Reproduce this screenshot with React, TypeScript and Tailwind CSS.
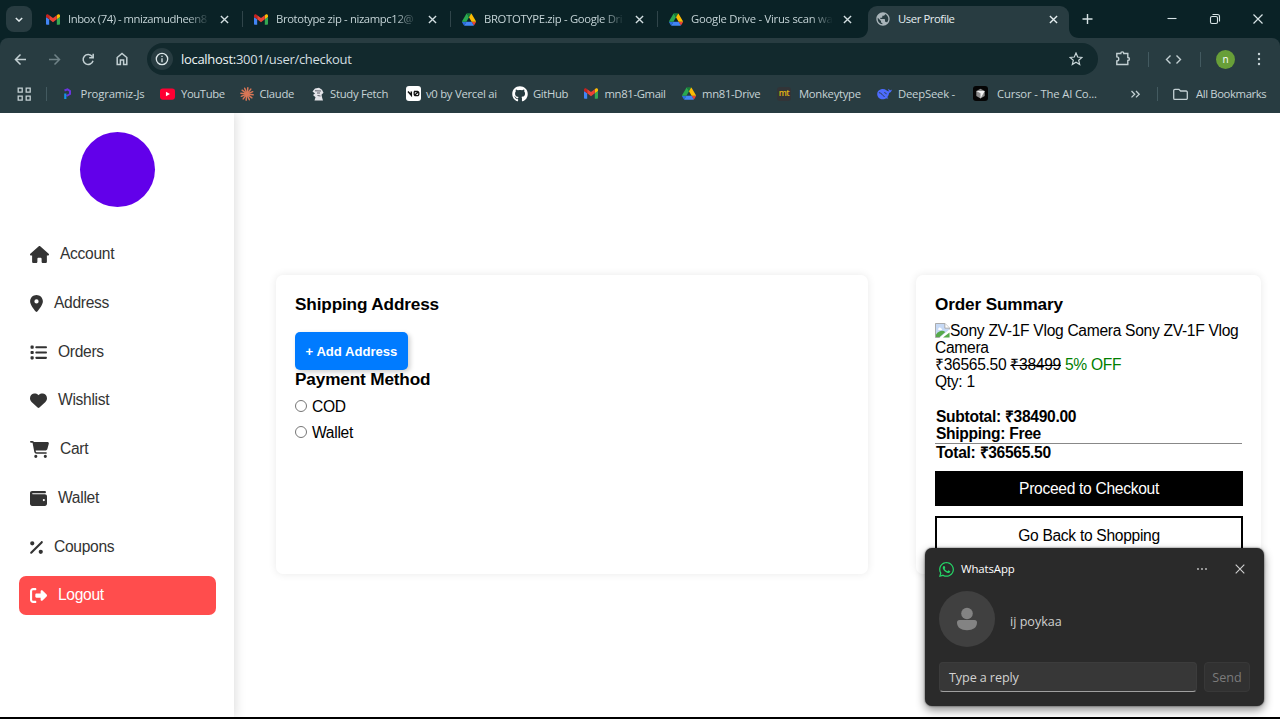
import React from "react";
import {
  FaCartShopping,
  FaGithub,
  FaHeart,
  FaHouse,
  FaList,
  FaLocationDot,
  FaPercent,
  FaRightFromBracket,
  FaWallet,
  FaWhatsapp,
} from "react-icons/fa6";
import { MdPublic } from "react-icons/md";

const ui = "font-['Open_Sans','Noto_Sans',sans-serif]";
const page = "font-['Liberation_Sans',Arial,sans-serif]";

function Gmail({ className }: { className: string }) {
  return (
    <svg viewBox="52 42 88 66" className={className}>
      <path fill="#4285f4" d="M58 108h14V74L52 59v43c0 3.32 2.69 6 6 6" />
      <path fill="#34a853" d="M120 108h14c3.32 0 6-2.69 6-6V59l-20 15" />
      <path fill="#fbbc04" d="M120 48v26l20-15v-8c0-7.42-8.47-11.65-14.4-7.2" />
      <path fill="#ea4335" d="M72 74V48l24 18 24-18v26L96 92" />
      <path fill="#c5221f" d="M52 51v8l20 15V48l-5.6-4.2c-5.94-4.45-14.4-.22-14.4 7.2" />
    </svg>
  );
}

function Drive({ className }: { className: string }) {
  return (
    <svg viewBox="0 0 87.3 78" className={className}>
      <path fill="#2b6fe0" d="m6.6 66.85 3.85 6.65c.8 1.4 1.95 2.5 3.3 3.3l13.75-23.8h-27.5c0 1.55.4 3.1 1.2 4.5z" />
      <path fill="#2aa950" d="m43.65 25-13.75-23.8c-1.35.8-2.5 1.9-3.3 3.3l-25.4 44a9.06 9.06 0 0 0 -1.2 4.5h27.5z" />
      <path fill="#ea4335" d="m73.55 76.8c1.35-.8 2.5-1.9 3.3-3.3l1.6-2.75 7.65-13.25c.8-1.4 1.2-2.95 1.2-4.5h-27.502l5.852 11.5z" />
      <path fill="#188038" d="m43.65 25 13.75-23.8c-1.35-.8-2.9-1.2-4.5-1.2h-18.5c-1.6 0-3.15.45-4.5 1.2z" />
      <path fill="#4285f4" d="m59.8 53h-32.3l-13.75 23.8c1.35.8 2.9 1.2 4.5 1.2h50.8c1.6 0 3.15-.45 4.5-1.2z" />
      <path fill="#fbbc04" d="m73.4 26.5-12.7-22c-.8-1.4-1.95-2.5-3.3-3.3l-13.75 23.8 16.15 28h27.45c0-1.55-.4-3.1-1.2-4.5z" />
    </svg>
  );
}

function Cross({ className }: { className: string }) {
  return (
    <svg viewBox="0 0 10 10" className={className} stroke="currentColor" strokeWidth="1.5" fill="none">
      <path d="M1 1l8 8M9 1l-8 8" />
    </svg>
  );
}

function Tab({ icon, title, width, textWidth, tracking, divider = true }: { icon: React.ReactNode; title: string; width: string; textWidth: string; tracking: string; divider?: boolean }) {
  return (
    <div className={`flex h-[38px] shrink-0 items-center ${width}`}>
      <span className="flex w-[22px] shrink-0 items-center">{icon}</span>
      <span
        className={`shrink-0 whitespace-nowrap text-[11.3px] leading-4 text-[#c4d3d6] [mask-image:linear-gradient(to_right,black_84%,transparent)] ${textWidth} ${tracking}`}
      >
        {title}
      </span>
      <Cross className="ml-[10px] h-[9px] w-[9px] shrink-0 text-[#d3dfe1]" />
      {divider && <span className="ml-auto h-4 w-px bg-[#30454a]" />}
    </div>
  );
}

function TabStrip() {
  return (
    <div className="flex h-[38px] w-full bg-[#0a2226]">
      <div className="flex w-[46px] shrink-0 items-center pl-[6px]">
        <div className="flex h-[26px] w-[26px] items-center justify-center rounded-[8px] bg-[#283c41]">
          <svg viewBox="0 0 10 6" className="h-[5px] w-[8px]" fill="none" stroke="#e0eaec" strokeWidth="1.8">
            <path d="M1 1l4 4 4-4" />
          </svg>
        </div>
      </div>
      <Tab icon={<Gmail className="h-[11px] w-[14px]" />} title="Inbox (74) - mnizamudheen8" width="w-[197px]" textWidth="w-[142px]" tracking="tracking-[-0.47px]" />
      <div className="w-[11px] shrink-0" />
      <Tab icon={<Gmail className="h-[11px] w-[14px]" />} title="Brototype zip - nizampc12@" width="w-[197px]" textWidth="w-[142px]" tracking="tracking-[-0.38px]" />
      <div className="w-[11px] shrink-0" />
      <Tab icon={<Drive className="h-[13px] w-[14px]" />} title="BROTOTYPE.zip - Google Dri" width="w-[196px]" textWidth="w-[141px]" tracking="tracking-[-0.33px]" />
      <div className="w-[11px] shrink-0" />
      <Tab icon={<Drive className="h-[13px] w-[14px]" />} title="Google Drive - Virus scan wa" width="w-[189px]" textWidth="w-[142px]" tracking="tracking-[-0.25px]" divider={false} />
      <div className="flex h-[38px] w-[223px] shrink-0 items-end">
        <svg viewBox="0 0 10 10" className="h-[10px] w-[10px]">
          <path d="M10 0v10H0C6 10 10 6 10 0Z" fill="#283c41" />
        </svg>
        <div className="flex h-[32px] w-[201px] items-center rounded-t-[9px] bg-[#283c41] pb-[6px] pl-[7px]">
          <MdPublic className="h-[16px] w-[16px] text-[#a9b4b9]" />
          <span className="ml-[7px] w-[146px] text-[11.3px] leading-4 tracking-[-0.42px] text-[#e5eef0]">User Profile</span>
          <Cross className="ml-[5px] h-[9px] w-[9px] text-[#e5eef0]" />
        </div>
        <svg viewBox="0 0 10 10" className="h-[10px] w-[10px]">
          <path d="M0 0v10h10C4 10 0 6 0 0Z" fill="#283c41" />
        </svg>
      </div>
      <svg viewBox="1.5 0 199 38" className="h-[38px] w-[199px] shrink-0" fill="none" stroke="#d7e3e5">
        <path d="M3 19h10M8 14v10" strokeWidth="1.4" />
        <path d="M88 18.500h9" strokeWidth="1.1" />
        <rect x="131" y="16.500" width="7" height="7" rx="1.500" strokeWidth="1.1" />
        <path d="M133 14.500h5a2 2 0 0 1 2 2v5" strokeWidth="1.1" />
        <path d="M174 14.500l9 9M183 14.500l-9 9" strokeWidth="1.2" />
      </svg>
    </div>
  );
}

function Toolbar() {
  return (
    <div className="flex h-[42px] w-full items-center rounded-t-[8px] bg-[#283c41]">
      <svg viewBox="0 0 147 42" className="h-[42px] w-[147px] shrink-0" fill="none" strokeWidth="1.5">
        <path d="M26 21.500H16M20.500 16.500l-5 5 5 5" stroke="#c3d0d3" />
        <path d="M49 21.500h10M54.500 16.500l5 5-5 5" stroke="#6f8287" />
        <path d="M92.200 18.500a5 5 0 1 0 .8 4.200M93.200 15.700v4h-4" stroke="#c3d0d3" />
        <path d="M117.200 26.500v-7l4.800-4 4.800 4v7h-3.200v-4.500h-3.200v4.500Z" stroke="#c3d0d3" />
      </svg>
      <div className="flex h-[32px] w-[951px] shrink-0 items-center rounded-full bg-[#12292d] pl-[4px] pr-[15px]">
        <span className="flex h-[22px] w-[22px] items-center justify-center rounded-full bg-[#283c41]">
          <svg viewBox="0 0 14 14" className="h-[14px] w-[14px]" fill="none" stroke="#dce7e9" strokeWidth="1.3">
            <circle cx="7" cy="7" r="5.700" />
            <path d="M7 6.200v4M7 3.800v1.300" />
          </svg>
        </span>
        <span className="ml-[8px] text-[13px] leading-5 tracking-[-0.3px] text-[#d3dee0]">
          <span className="text-[#eef5f6]">localhost:</span>3001/user/checkout
        </span>
        <svg viewBox="0 0 14 14" className="ml-auto h-[14px] w-[14px]" fill="none" stroke="#c9d6d9" strokeWidth="1.2">
          <path d="M7 1l1.700 4 4.300.4-3.300 2.900 1 4.300L7 10.300l-3.700 2.300 1-4.300L1 5.400 5.300 5Z" />
        </svg>
      </div>
      <svg viewBox="0 0 115 42" className="h-[42px] w-[115px] shrink-0" fill="none" stroke="#c3d0d3" strokeWidth="1.4">
        <path d="M18.500 16.500h4c0-2.200 3-2.200 3 0h4v4c2.200 0 2.200 3 0 3v4H18.500v-3.600c2.600 0 2.600-4 0-4Z" transform="translate(.3 -1)" />
        <path d="M50.500 14v15M102.500 14v15" stroke="#435a60" strokeWidth="1" />
        <path d="M72.500 17.500l-4 4 4 4M78.500 17.500l4 4-4 4" />
      </svg>
      <div className="ml-[3px] flex h-[19px] w-[19px] items-center justify-center rounded-full bg-[#689f38] pb-px text-[10px] leading-none text-white">n</div>
      <svg viewBox="0 0 4 16" className="ml-[22px] h-[16px] w-[4px]" fill="#c9d6d9">
        <circle cx="2" cy="3" r="1.200" />
        <circle cx="2" cy="8" r="1.200" />
        <circle cx="2" cy="13" r="1.200" />
      </svg>
    </div>
  );
}

const rays = [0, 30, 60, 90, 120, 150, 180, 210, 240, 270, 300, 330];

const bookmarks: { label: string; width: string; icon: React.ReactNode; gap: string; tracking: string }[] = [
  {
    label: "Programiz-Js", width: "w-[98px]", gap: "w-[18.5px]", tracking: "tracking-[-0.15px]",
    icon: (
      <svg viewBox="0 0 12 14" className="h-[14px] w-[12px]" fill="none">
        <path d="M2.500 3.500 5.500 2.300 8 4v3L4.500 9" stroke="#6a35e0" strokeWidth="2" />
        <path d="M3.300 6.500V12" stroke="#1693e8" strokeWidth="2.200" />
      </svg>
    ),
  },
  {
    label: "YouTube", width: "w-[80px]", gap: "w-[21px]", tracking: "tracking-[-0.4px]",
    icon: (
      <svg viewBox="0 0 16 12" className="h-[12px] w-[15px]">
        <rect width="16" height="12" rx="3" fill="#ff0033" />
        <path d="M6.300 3.500v5l4.300-2.500Z" fill="#fff" />
      </svg>
    ),
  },
  {
    label: "Claude", width: "w-[71px]", gap: "w-[19.5px]", tracking: "tracking-[-0.3px]",
    icon: (
      <svg viewBox="0 0 14 14" className="h-[14px] w-[14px]" stroke="#d97757" strokeWidth="1.500" strokeLinecap="round">
        {rays.map((a) => (
          <path key={a} d="M7 7V.8" transform={`rotate(${a + 8} 7 7)`} />
        ))}
      </svg>
    ),
  },
  {
    label: "Study Fetch", width: "w-[95px]", gap: "w-[19px]", tracking: "tracking-[-0.28px]",
    icon: (
      <svg viewBox="0 0 14 14" className="h-[14px] w-[14px]">
        <path d="M1.500 4.500 4 1.500l4-.8 3 2 1.500 3-2 2 .5 2.500 1 3.300H3.500l1-3.200L2 8l2-1.500Z" fill="#e3e3e8" />
        <path d="m4 3.800 6 .2M6 6h3M6.500 8.500l3 .5" stroke="#4c4c57" strokeWidth=".9" />
      </svg>
    ),
  },
  {
    label: "v0 by Vercel ai", width: "w-[106px]", gap: "w-[20px]", tracking: "tracking-[-0.27px]",
    icon: (
      <svg viewBox="0 0 15 15" className="h-[15px] w-[15px]" fill="none" stroke="#111" strokeWidth="1.500">
        <rect width="15" height="15" rx="3" fill="#fff" stroke="none" />
        <path d="M2 5.500l3.300 3.700V5.500" />
        <path d="M8.500 5.500h3a1.300 1.300 0 0 1 1.300 1.300v1.500A1.300 1.300 0 0 1 11.500 9.600h-2A1.300 1.300 0 0 1 8.200 8.300v-2ZM8.500 9.300l4-3.600" strokeWidth="1.300" />
      </svg>
    ),
  },
  { label: "GitHub", width: "w-[72px]", gap: "w-[21px]", tracking: "tracking-[-0.35px]", icon: <FaGithub className="h-[16px] w-[16px] text-white" /> },
  { label: "mn81-Gmail", width: "w-[98px]", gap: "w-[20.5px]", tracking: "tracking-[-0.35px]", icon: <Gmail className="h-[11px] w-[14px]" /> },
  { label: "mn81-Drive", width: "w-[95px]", gap: "w-[20px]", tracking: "tracking-[-0.32px]", icon: <Drive className="h-[13px] w-[14px]" /> },
  {
    label: "Monkeytype", width: "w-[100px]", gap: "w-[22px]", tracking: "tracking-[-0.3px]",
    icon: <span className="flex h-[14px] w-[14px] items-center justify-center rounded-[3px] bg-[#323437] pb-px text-[8.5px] font-semibold leading-none tracking-[-0.4px] text-[#e2b714]">mt</span>,
  },
  {
    label: "DeepSeek -", width: "w-[96px]", gap: "w-[21px]", tracking: "tracking-[-0.22px]",
    icon: (
      <svg viewBox="0 0 16 12" className="h-[12px] w-[15px]">
        <path d="M15.800 1.300c-.8.9-1.700.8-2.300.5-.6-.4-1.100-1-1.500-1.300 0 1.300.3 2 .9 2.600-1 .2-1.800-.5-2.900-1.200C8.700.9 6.800.5 4.500.8 1.700 1.300 0 3.600.2 6.200c.2 3.200 2.700 5.500 6 5.500 1.400 0 2.600-.5 3.500-1.200.8.4 1.700.4 2.300.1.300-.5-.6-.6-1.200-1.200 1.500-1.600 2-3.200 2-4.600 1.800-.3 2.900-1.500 3-3.500Z" fill="#4d6bfe" />
        <path d="M2 4.500c2.800.4 4.300 3 6 4.600M7.800 4.500c1.200 0 1.900.7 2 1.700" stroke="#283c41" fill="none" strokeWidth="1" />
      </svg>
    ),
  },
  {
    label: "Cursor - The AI Co...", width: "w-[156px]", gap: "w-[24px]", tracking: "tracking-[-0.17px]",
    icon: (
      <svg viewBox="0 0 15 15" className="h-[15px] w-[15px]">
        <rect width="15" height="15" rx="3" fill="#050505" />
        <path d="m3.300 5 4.200-2.300L11.700 5v5L7.500 12.500 3.300 10Z" fill="#8d8d8d" />
        <path d="M3.300 5h8.400l-4.200 7.500V7.300Z" fill="#f1f1f1" />
      </svg>
    ),
  },
];

function BookmarksBar() {
  return (
    <div className="flex h-[33px] w-full items-center bg-[#283c41] pb-[6px] text-[11.3px] leading-4 text-[#c6d3d6]">
      <svg viewBox="0 0 62 16" className="h-[16px] w-[62px] shrink-0" fill="none" stroke="#c3d0d3" strokeWidth="1.300">
        <path d="M18.200 2.200h4v4h-4zM26.200 2.200h4v4h-4zM18.200 10.200h4v4h-4zM26.200 10.200h4v4h-4z" />
        <path d="M46.500 1v14" stroke="#435a60" strokeWidth="1" />
      </svg>
      {bookmarks.map((b) => (
        <div key={b.label} className={`flex shrink-0 items-center whitespace-nowrap ${b.width}`}>
          <span className={`shrink-0 ${b.gap}`}>{b.icon}</span>
          <span className={b.tracking}>{b.label}</span>
        </div>
      ))}
      <svg viewBox="0 0 67 16" className="h-[16px] w-[67px] shrink-0" fill="none" stroke="#c3d0d3" strokeWidth="1.300">
        <path d="M2.500 5l3.200 3.200-3.200 3.200M7 5l3.200 3.200L7 11.400" />
        <path d="M28.500 1v14" stroke="#435a60" strokeWidth="1" />
        <path d="M44.700 4.500a1.200 1.200 0 0 1 1.200-1.200h4l1.700 1.700h5.500a1.200 1.200 0 0 1 1.200 1.200v6a1.200 1.200 0 0 1-1.200 1.200H45.900a1.200 1.200 0 0 1-1.200-1.200Z" />
      </svg>
      <span className="whitespace-nowrap tracking-[-0.38px]">All Bookmarks</span>
    </div>
  );
}

const menu = [
  { label: "Account", Icon: FaHouse, size: "h-[17px] w-[19px]" },
  { label: "Address", Icon: FaLocationDot, size: "h-[17px] w-[13px]" },
  { label: "Orders", Icon: FaList, size: "h-[17px] w-[17px]" },
  { label: "Wishlist", Icon: FaHeart, size: "h-[17px] w-[17px]" },
  { label: "Cart", Icon: FaCartShopping, size: "h-[17px] w-[19px]" },
  { label: "Wallet", Icon: FaWallet, size: "h-[17px] w-[17px]" },
  { label: "Coupons", Icon: FaPercent, size: "h-[17px] w-[13px]" },
  { label: "Logout", Icon: FaRightFromBracket, size: "h-[17px] w-[17px]" },
];

function Sidebar() {
  return (
    <aside className="z-10 flex w-[234px] shrink-0 flex-col bg-white px-[19px] pt-[19px] shadow-[2px_0_10px_rgba(0,0,0,0.13)]">
      <div className="h-[75px] w-[75px] shrink-0 self-center rounded-full bg-[#6200ea]" />
      <nav className="mt-[28px] flex w-[197px] flex-col gap-[9.75px]">
        {menu.map(({ label, Icon, size }) => (
          <a
            key={label}
            className={`flex h-[39px] items-center rounded-[7px] pb-[2px] pl-[11px] ${label === "Logout" ? "bg-[#ff4d4d] text-white" : "text-[#333]"}`}
          >
            <Icon className={`mt-[2px] shrink-0 ${size}`} />
            <span className="ml-[11px] text-[15.6px] leading-[17px] tracking-[-0.3px]">{label}</span>
          </a>
        ))}
      </nav>
    </aside>
  );
}

function BrokenImage() {
  return (
    <svg viewBox="0 0 16 16" className="inline-block h-[15px] w-[15px] align-[-2px]">
      <path d="M.5.500h10l5 5v10H.5Z" fill="#c6d9f5" stroke="#a5a5a5" />
      <path d="M3.500 6.500c.3-2 2.600-2 3-.6 1.500 0 1.500 1.600.3 1.600H4c-.7 0-1-.5-.5-1Z" fill="#fff" />
      <path d="M1 15v-2.500C4 8 8 7.500 11 9.500L5 15Z" fill="#57a94b" />
      <path d="M4.500 16 16 6.500V16Z" fill="#fff" />
      <path d="M10.500.500v5h5" fill="#fff" stroke="#a5a5a5" />
      <path d="M8.500 15.500h7v-5.500Z" fill="#57a94b" />
    </svg>
  );
}

function Checkout() {
  return (
    <main className="flex min-w-0 flex-1 items-start gap-[48px] pl-[42px] pt-[162px] text-[15.6px] leading-[17px] tracking-[-0.3px] text-black">
      <section className="h-[299px] w-[592px] shrink-0 rounded-[7px] bg-white px-[19px] pt-[19px] shadow-[0_0_9px_rgba(0,0,0,0.09)]">
        <h2 className="text-[17.2px] font-bold leading-[20px] tracking-[-0.15px]">Shipping Address</h2>
        <button className="mt-[18px] block h-[38px] w-[113px] whitespace-nowrap rounded-[5px] bg-[#007bff] text-[13.1px] font-bold tracking-normal text-white shadow-[2px_2px_5px_rgba(0,0,0,0.2)]">
          + Add Address
        </button>
        <h2 className="text-[17.2px] font-bold leading-[19px] tracking-[-0.15px]">Payment Method</h2>
        {["COD", "Wallet"].map((m) => (
          <label key={m} className="mt-[9px] flex h-[17px] items-center">
            <span className="mb-[2px] h-[12px] w-[12px] rounded-full border border-[#767676] bg-white" />
            <span className="ml-[5px]">{m}</span>
          </label>
        ))}
      </section>
      <section className="h-[299px] w-[345px] shrink-0 rounded-[7px] bg-white px-[19px] pt-[19px] shadow-[0_0_9px_rgba(0,0,0,0.09)]">
        <h2 className="text-[17.2px] font-bold leading-[20px] tracking-[-0.15px]">Order Summary</h2>
        <div className="mt-[8px]">
          <p className="whitespace-nowrap">
            <BrokenImage />
            Sony ZV-1F Vlog Camera Sony ZV-1F Vlog
            <br />
            Camera
          </p>
          <p>
            ₹36565.50 <s>₹38499</s> <span className="text-[#008000]">5% OFF</span>
          </p>
          <p>Qty: 1</p>
        </div>
        <div className="mt-[18px] pb-px pl-px font-bold">
          <p>Subtotal: ₹38490.00</p>
          <p>Shipping: Free</p>
        </div>
        <div className="border-t border-[#888] pl-px font-bold">Total: ₹36565.50</div>
        <button className="mt-[10px] block h-[35px] w-[308px] bg-black tracking-[-0.3px] text-white">Proceed to Checkout</button>
        <button className="mt-[10px] block h-[38px] w-[308px] border-2 border-black bg-white tracking-[-0.3px]">Go Back to Shopping</button>
      </section>
    </main>
  );
}

function Notification() {
  return (
    <div className={`absolute left-[925px] top-[548px] z-20 h-[158px] w-[339px] rounded-[7px] bg-[#2a2a2a] px-[14px] shadow-[0_4px_10px_rgba(0,0,0,0.45),0_0_2px_rgba(0,0,0,0.7)] ${ui}`}>
      <div className="flex h-[42px] items-center">
        <FaWhatsapp className="-ml-px h-[17px] w-[17px] text-[#25d366]" />
        <span className="ml-[6px] w-[235px] text-[11.4px] leading-4 tracking-[-0.1px] text-white">WhatsApp</span>
        <svg viewBox="0 0 12 4" className="h-[4px] w-[12px]" fill="#c8c8c8">
          <circle cx="2" cy="2" r=".9" />
          <circle cx="6" cy="2" r=".9" />
          <circle cx="10" cy="2" r=".9" />
        </svg>
        <svg viewBox="0 0 10 10" className="ml-[27px] h-[10px] w-[10px]" stroke="#d0d0d0" strokeWidth="1.100">
          <path d="M.7.7l8.600 8.600M9.300.7.7 9.300" />
        </svg>
      </div>
      <div className="flex h-[57px] items-center">
        <svg viewBox="0 0 56 56" className="h-[56px] w-[56px]">
          <circle cx="28" cy="28" r="28" fill="#404040" />
          <circle cx="28" cy="22.500" r="5.800" fill="#838383" />
          <path d="M20.500 29h15a2.500 2.500 0 0 1 2.500 2.500c0 5-4 7.700-10 7.700s-10-2.700-10-7.700a2.500 2.500 0 0 1 2.500-2.500Z" fill="#838383" />
        </svg>
        <span className="ml-[15px] mt-[7px] text-[12.6px] leading-5 text-[#cfcfcf]">ij poykaa</span>
      </div>
      <div className="mt-[15px] flex gap-[7px] text-[12.6px] leading-5">
        <div className="flex h-[30px] w-[258px] items-center rounded-[4px] border border-x-[#3c3c3c] border-b-[#a0a0a0] border-t-[#3c3c3c] bg-[#373737] pl-[9px] pt-[2px] tracking-[-0.1px] text-[#d2d2d2]">
          Type a reply
        </div>
        <div className="flex h-[30px] w-[46px] items-center justify-center rounded-[4px] border border-[#383838] bg-[#313131] pt-[2px] text-[#7b7b7b]">Send</div>
      </div>
    </div>
  );
}

export default function App() {
  return (
    <div className="relative flex h-[719px] w-[1280px] flex-col overflow-hidden bg-white">
      <header className={`shrink-0 bg-[#0a2226] ${ui}`}>
        <TabStrip />
        <Toolbar />
        <BookmarksBar />
      </header>
      <div className={`flex h-[604px] shrink-0 overflow-hidden bg-white ${page}`}>
        <Sidebar />
        <Checkout />
      </div>
      <div className="h-[2px] shrink-0 bg-black" />
      <Notification />
    </div>
  );
}
